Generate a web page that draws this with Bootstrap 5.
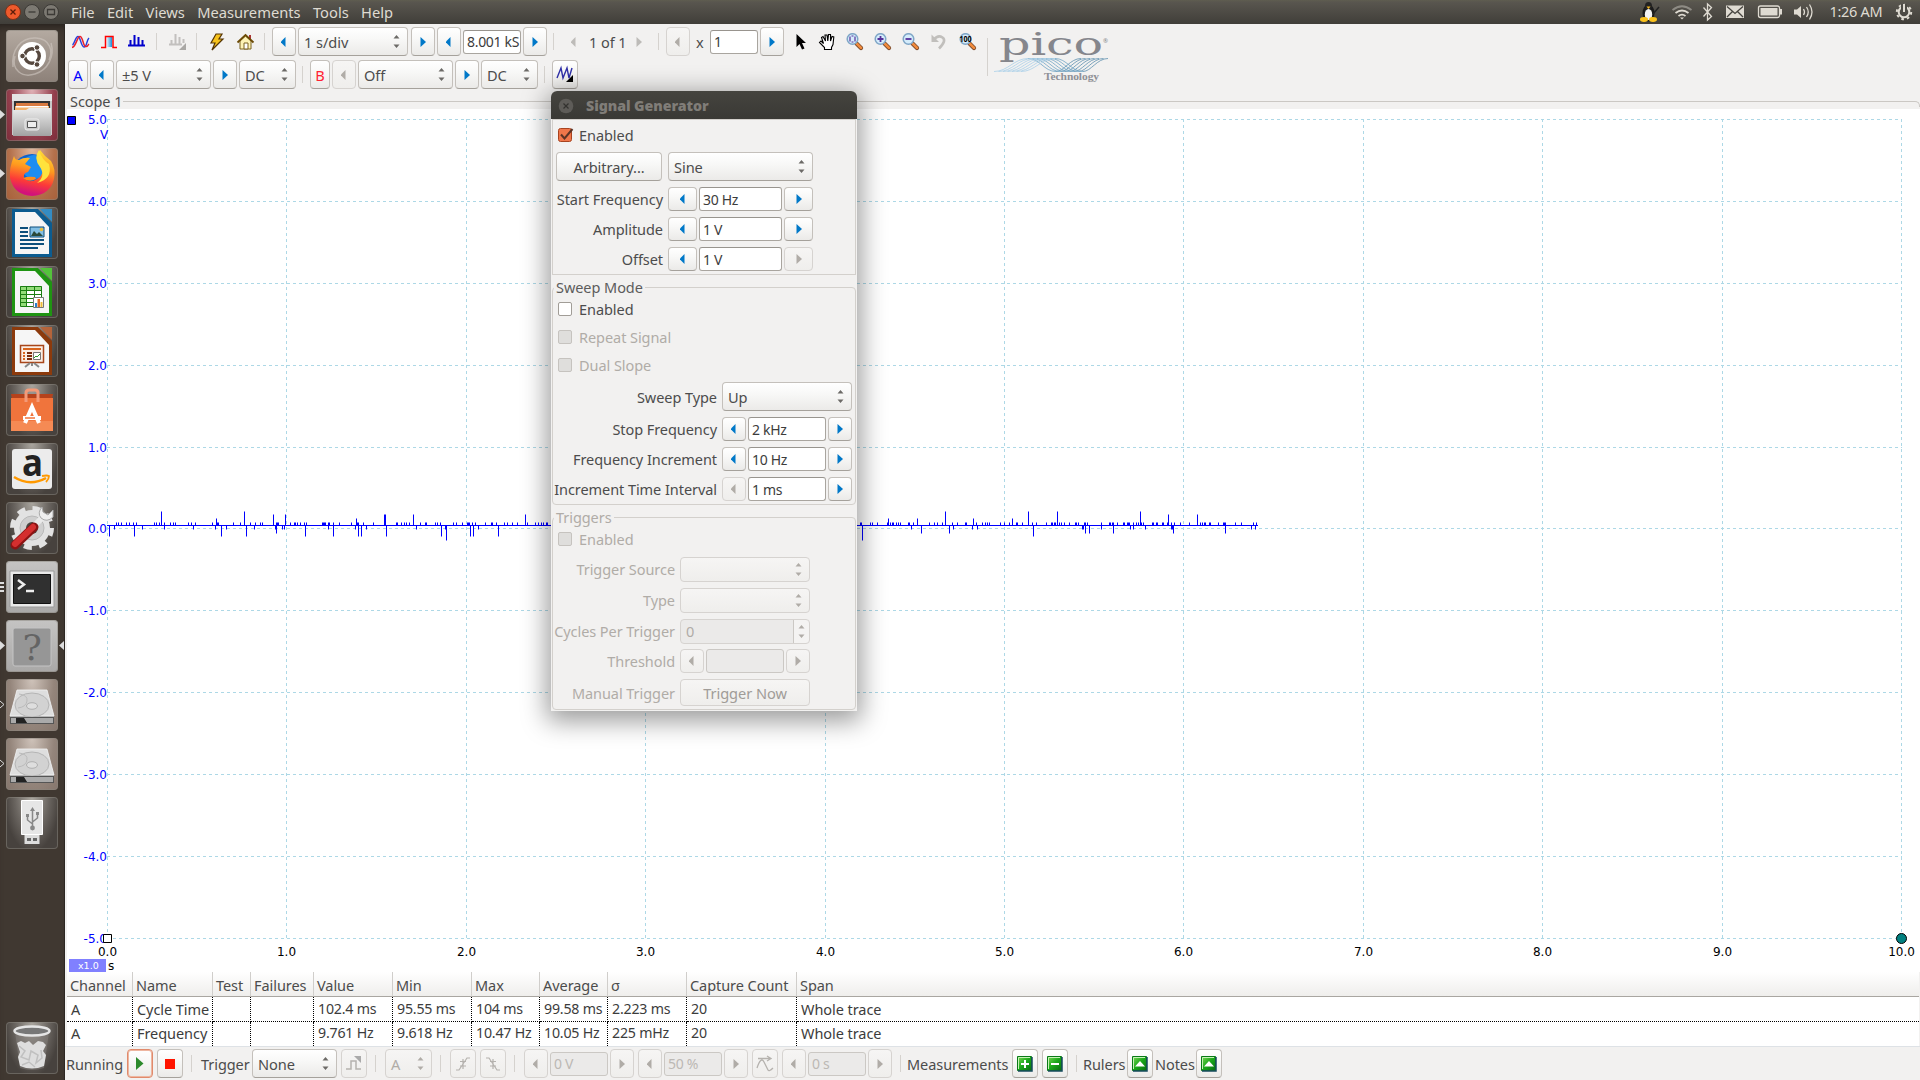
<!DOCTYPE html>
<html lang="en">
<head>
<meta charset="utf-8">
<title>PicoScope</title>
<link rel="stylesheet" href="https://cdn.jsdelivr.net/npm/bootstrap@5.3.0/dist/css/bootstrap.min.css">
<script src="https://cdn.jsdelivr.net/npm/bootstrap@5.3.0/dist/js/bootstrap.bundle.min.js"></script>
<style>
body{width:1920px;height:1080px;overflow:hidden;background:#f2f1f0;color:#4c4c4c;font:14.5px/18px "Noto Sans",sans-serif;letter-spacing:-.06px}
svg{display:block;overflow:visible}
.topbar{height:24px;background:linear-gradient(#5f5d50 0,#59564f 2px,#403e39 100%);color:#dfdbd2;font-size:14.7px}
.winbtns{padding-left:5px}
.winbtn{width:16px;height:16px;margin-right:3px}
.menus{gap:12.4px;margin:-1px 0 0 9px;letter-spacing:0}
.launcher{width:65px;height:1056px;background:#403831;border-right:1px solid #2c2722;padding:6px 0 6px 6px;box-shadow:inset 0 8px 8px -6px #241f1b}
.tile{position:relative;width:52px;height:52px;border-radius:4px;margin-bottom:7px;background:radial-gradient(ellipse at 50% 0,#aaa69f 0,#6b6661 45%,#47423e 75%);box-shadow:inset 0 0 0 1px #8a857e80;flex:none}
.tile.c-ubuntu{background:linear-gradient(#b4aaa1,#8d8179)}
.tile.c-files{background:radial-gradient(ellipse at 50% 0,#e1b3b8,#943f4d 60%,#7c2c3a)}
.tile.c-fox{background:radial-gradient(ellipse at 50% 0,#e0b79d,#b4714c 60%,#a7603a)}
.tile.c-gray{background:linear-gradient(#c5c4c3,#a9a8a7)}
.tile.c-disk{background:radial-gradient(ellipse at 50% 0,#cfc3ba,#94857b 60%,#85766d)}
.pip{position:absolute;left:-6px;top:21px}
.pip-r{position:absolute;left:53px;top:21px}
.work{width:1855px;height:1056px}
.tools{height:73px}
.toolrows{width:922px}
.bar1,.bar2,.barst{display:grid;align-items:center;justify-items:start}
.bar1{padding-left:7px;height:33px;padding-top:2px;grid-template-columns:29px 27px 28px 13px 27px 14px 27px 27px 8px 26px 113px 26px 26px 60px 30px 18px 18px 47px 22px 8px 30px 14px 50px 35px 23px 28px 28px 28px 28px 29px 29px}
.bar2{padding-left:3px;height:33px;padding-top:2px;grid-template-columns:22px 26px 97px 26px 63px 8px 22px 26px 97px 26px 63px 8px 26px}
.barst{padding-left:1px;height:34px;white-space:nowrap;grid-template-columns:61px 30px 34px 10px 51px 89px 34px 10px 55px 10px 30px 34px 10px 26px 60px 28px 26px 60px 28px 30px 26px 60px 32px 7px 105px 30px 34px 7px 44px 28px 41px 26px}
.vsep{width:1px;height:17px;background:#d5d2ce}
.gbtn,.combo{display:flex;align-items:center;justify-content:center;height:29px;border:1px solid #c4c0bb;border-bottom-color:#a5a19b;border-radius:4px;background:linear-gradient(#fff,#f8f8f7 40%,#ebeae8);color:#4c4c4c;padding:0;font-size:14.6px;white-space:nowrap}
.gbtn.off,.combo.off{background:linear-gradient(#f6f5f4,#efeeec);border-color:#d6d3d0;color:#b0aca7}
.gbtn.go{color:#0078c8}
.gbtn.cha{color:#00f}.gbtn.chb{color:#f23}
.combo{justify-content:space-between;padding:0 7px 0 5px}
.combo svg{color:#6c6a67}.combo.off svg{color:#b0aca7}
.field{display:flex;align-items:center;height:24px;border:1px solid #a9a59f;border-top-color:#98948e;border-radius:3px;background:#fff;color:#3c3c3c;padding:1px 0 0 3px;white-space:nowrap;overflow:hidden;font-size:14px;letter-spacing:-.3px}
.field.off{background:#ebeae9;border-color:#cbc8c4;color:#bcb8b4}
.w20{width:20px}.w24{width:24px}.w26{width:26px}.w29{width:29px}.w47{width:47px}.w48{width:48px}.w57{width:57px}.w58{width:58px}.w78{width:78px}.w83{width:83px}.w85{width:85px}.w95{width:95px}.w106{width:106px}.w110{width:110px}.w130{width:130px}.w145{width:145px}
.run{border-color:#e08a6c;box-shadow:inset 0 0 0 1px #eeb6a0}
.scope{height:949px}
.scopename{height:12px;padding-left:5px;line-height:8px}
.frameln{flex:1;height:6px;border-top:1px solid #cbc8c4;border-right:1px solid #cbc8c4;border-radius:0 5px 0 0;margin:4px 0 0 1px}
.plot{margin-left:2px;background:#fff;letter-spacing:0}
.meas{table-layout:fixed;width:1852px;margin-left:2px;background:#fff;border-collapse:separate;border-spacing:0}
.meas th{height:25px;font-weight:400;padding:1px 0 0 3px;border-right:1px solid #d0cecb;border-bottom:1px solid #a9a6a1;background:linear-gradient(#fff,#efeeec);white-space:nowrap}
.meas td{height:25px;padding:0 0 0 4px;color:#3c3c3c;border-right:1px dotted #000;border-bottom:1px dotted #000;white-space:nowrap}
.meas .num{font-size:14.2px;letter-spacing:-.2px}
.meas tr:last-child td{height:24px;border-bottom:0;padding-bottom:2px}
.meas th:last-child,.meas td:last-child{border-right:0}
.dlg{position:absolute;left:551px;top:91px;width:306px;height:620px;background:#f2f1f0;border-radius:6px 6px 0 0;box-shadow:0 6px 26px 4px #00000066;z-index:5}
.dlgbar{height:28px;background:linear-gradient(#45443f,#3a3935);border-radius:6px 6px 0 0;color:#807d78;font-weight:700;padding:1px 0 0 7px}
.dlgbar b{margin-left:12px;font-size:14.2px}
.box{border:1px solid #d3d0cc;margin:0 1px;position:relative}
.box1{height:156px}.box2{height:218px;margin-top:12px;border-radius:4px}.box3{height:193px;margin-top:12px;border-radius:4px}
.cap{position:absolute;top:-10px;left:1px;background:#f2f1f0;padding:0 2px;color:#5c5c5c}
.chk{display:flex;align-items:center;height:28px;padding-left:5px;gap:7px}
.chk.first{height:30px;gap:5px}
.box2 .chk.first,.box3 .chk.first{height:28px;gap:7px;margin-top:7px}
.tick{width:14px;height:14px;border:1px solid #a19d97;border-radius:2px;background:#fff}
.dim{color:#b0aca7}.dim .tick{background:#dfdedc;border-color:#c6c3bf}
.frow{display:flex;gap:2px;align-items:center;height:24px;margin-bottom:6px}
.frow .gbtn{height:24px}
.frow.tall{height:29px;margin-top:3px}
.frow.tall .gbtn{height:29px}
.frow.wave{margin-top:2px;padding-left:3px}
.box3 .frow{margin-bottom:7px}
.box3 .cyc{margin-bottom:6px}
.box3 .combo{height:25px}
.box3 .src{margin-top:4px}
.box3 .last{height:27px;margin:-1px 0 0}
.box3 .last .gbtn{height:27px;color:#a09c98}
.combo.spin{padding-right:0;background:linear-gradient(90deg,#ebeae9 112px,#cbc8c4 112px 113px,#f4f3f2 113px)}
.lab{text-align:right;white-space:nowrap;margin-right:3px;flex:none}
.l1{width:110px}.l2{width:164px}.l3{width:122px}
</style>
</head>
<body>
<svg width="0" height="0" class="position-absolute">
<defs>
<symbol id="la" viewBox="0 0 6 10"><path d="M4.500 0v10L-.5 5z" fill="currentColor"/></symbol>
<symbol id="ra" viewBox="0 0 6 10"><path d="M.5 0v10L6 5z" fill="currentColor"/></symbol>
<symbol id="ud" viewBox="0 0 7 13"><path d="M.5 3.500L3.500 0l3 3.500zM.5 9.500l3 3.500 3-3.500z" fill="currentColor"/></symbol>
<symbol id="mag" viewBox="0 0 18 18"><path d="M10.500 10.500l4.500 4.500" stroke="#7b4a2a" stroke-width="4.200" stroke-linecap="round"/><path d="M11 10.800l4 4" stroke="#f28b3c" stroke-width="2.600" stroke-linecap="round"/><circle cx="6.500" cy="6" r="5.300" fill="#d5ecfb" stroke="#7fa6c6" stroke-width="1.500"/></symbol>
<symbol id="disk" viewBox="0 0 52 52"><path d="M11 11h30l7 25v9H4v-9z" fill="#8f8f8f"/><path d="M11 11h30l7 26H4z" fill="#dedede" stroke="#f4f4f4" stroke-width=".8"/><ellipse cx="26" cy="26" rx="17" ry="12" fill="#d2d2d2" stroke="#b5b5b5"/><ellipse cx="26" cy="27" rx="5.500" ry="3.300" fill="#dedede" stroke="#b0b0b0"/><path d="M13 15q9 1 8 7t-9 7" fill="none" stroke="#bbb"/><path d="M4 38h44v7H4z" fill="#555"/><path d="M5 39h5v5H5zM17 39h30v5H21z" fill="#aaa"/><path d="M10 39h8l3 5H10z" fill="#222"/></symbol>
<linearGradient id="gg" x2="1" y2="1"><stop stop-color="#7ed957"/><stop offset=".5" stop-color="#1aa81a"/><stop offset="1" stop-color="#086c10"/></linearGradient>
<symbol id="green" viewBox="0 0 16 16"><path d="M.5.5h14v14H.5z" fill="url(#gg)" stroke="#0a7a18"/><path d="M1.500 13V1.500H13" fill="none" stroke="#c7f3b7"/><path d="M15 1v14H1" fill="none" stroke="#164a5c" stroke-width="1.500"/></symbol>
<linearGradient id="sil" x2="0" y2="1"><stop stop-color="#ececec"/><stop offset="1" stop-color="#a2a2a2"/></linearGradient>
<linearGradient id="fox" x2=".7" y2="1" x1=".9"><stop stop-color="#ffe53b"/><stop offset=".45" stop-color="#ff9a1e"/><stop offset=".75" stop-color="#fc3b38"/><stop offset="1" stop-color="#d2127b"/></linearGradient>
<linearGradient id="sq"><stop stop-color="#fff"/><stop offset="1" stop-color="#1790d8"/></linearGradient>
</defs>
</svg>

<nav class="topbar d-flex align-items-center">
  <div class="winbtns d-flex">
    <svg class="winbtn" viewBox="0 0 16 16"><circle cx="8" cy="8" r="7.500" fill="#ee5a2c" stroke="#7d3018"/><path d="M5.500 5.500l5 5m0-5l-5 5" stroke="#5a1d0a" stroke-width="1.300"/></svg>
    <svg class="winbtn" viewBox="0 0 16 16"><circle cx="8" cy="8" r="7.500" fill="#7c7972" stroke="#3c3a36"/><path d="M4.500 8h7" stroke="#3c3a36" stroke-width="1.300"/></svg>
    <svg class="winbtn" viewBox="0 0 16 16"><circle cx="8" cy="8" r="7.500" fill="#7c7972" stroke="#3c3a36"/><path d="M4.500 5.500h7v5h-7z" fill="none" stroke="#3c3a36" stroke-width="1.300"/></svg>
  </div>
  <div class="menus d-flex"><span>File</span><span>Edit</span><span>Views</span><span>Measurements</span><span>Tools</span><span>Help</span></div>
  <svg class="ms-auto" width="280" height="24" viewBox="1640 0 280 24">
    <ellipse cx="1648.500" cy="13" rx="6" ry="8.500" fill="#1b1b1b"/><ellipse cx="1648.500" cy="6" rx="3.500" ry="4" fill="#222"/><ellipse cx="1648.500" cy="14.500" rx="3.700" ry="5.500" fill="#f4f4f4"/><path d="M1646.500 6.500h4l-2 2.500z" fill="#f4b51e"/><ellipse cx="1644" cy="19.500" rx="4" ry="2.400" fill="#fbc21c"/><ellipse cx="1653" cy="19.500" rx="4" ry="2.400" fill="#fbc21c"/><path d="M1653 14l6-7" stroke="#222" stroke-width="1.500"/>
    <g fill="none" stroke="#dfdbd2" stroke-width="1.800"><path d="M1672.500 10q9.500-7.500 19 0" stroke="#8e8b84"/><path d="M1675.500 13q6.500-5 13 0M1678.500 16q3.500-2.600 7 0"/><path d="M1703.500 7.500l8 9-4 3.500V4l4 3.500-8 9" stroke-width="1.300"/></g><path d="M1680 17.500h4l-2 2z" fill="#dfdbd2"/>
    <path d="M1726 5.500h18v12.500h-18z" fill="#dfdbd2"/><path d="M1727 6.500l8 7 8-7M1727 17l5.500-5.500M1743 17l-5.500-5.500" fill="none" stroke="#45433e" stroke-width="1.300"/>
    <rect x="1758.500" y="6" width="21" height="11.500" rx="2" fill="none" stroke="#dfdbd2" stroke-width="1.300"/><path d="M1760.500 8h17v7.500h-17zM1780 9h2v5.500h-2z" fill="#dfdbd2"/>
    <path d="M1794 9.500h3l4-3.500v12l-4-3.500h-3z" fill="#dfdbd2"/><path d="M1803.500 9q2 3 0 6M1806.500 7q3.500 5 0 10M1809.500 4.500q5 7.500 0 15" fill="none" stroke="#dfdbd2" stroke-width="1.300"/>
    <text x="1829.500" y="17" font-size="14.500" fill="#dfdbd2" textLength="53">1:26 AM</text>
    <circle cx="1904" cy="12" r="5.300" fill="none" stroke="#dfdbd2" stroke-width="2"/><circle cx="1904" cy="12" r="7.200" fill="none" stroke="#dfdbd2" stroke-width="2" stroke-dasharray="2.600 3.050"/><path d="M1901 4h6v7h-6z" fill="#4d4b45"/><path d="M1904 4v8" stroke="#dfdbd2" stroke-width="2"/>
  </svg>
</nav>

<div class="d-flex">
<aside class="launcher d-flex flex-column">
  <div class="tile c-ubuntu"><svg width="52" height="52"><g fill="none" stroke="#d0c8c1" stroke-opacity=".6" stroke-width="1.500"><path d="M7 37C5 20 15 7 30 8s17 14 13 22M45 13c4 13-3 27-16 31S5 40 9 26"/></g><circle cx="26" cy="26" r="14" fill="#fff"/><circle cx="26" cy="26" r="7.300" fill="none" stroke="#56483f" stroke-width="3.400"/><path d="M26 26L12 26M26 26l7 12M26 26l7-12" stroke="#fff" stroke-width="1.600"/><g fill="#56483f" stroke="#fff"><circle cx="16.500" cy="26" r="2.800"/><circle cx="31" cy="17.500" r="2.800"/><circle cx="31" cy="34.500" r="2.800"/></g></svg></div>
  <div class="tile c-files"><svg class="pip" width="6" height="9"><path d="M0 0l5 4.500L0 9z" fill="#ddd"/></svg><svg width="52" height="52"><path d="M6 5h40v9H6z" fill="#e5e5e5"/><path d="M6 12h40v34H6z" fill="#c8c8c8"/><path d="M8 12h36v10H8z" fill="#333"/><path d="M10 14h32v3H10z" fill="#d97a40"/><path d="M9 17h34v5H9z" fill="#f5b26b"/><path d="M10 17h32v1.500H10z" fill="#fff"/><path d="M7 21h13l3-2h22v28H7z" fill="url(#sil)"/><rect x="19" y="30" width="14" height="11" rx="2" fill="#c9c9c9" stroke="#eee"/><path d="M21.500 32.500h9v6h-9z" fill="#eee" stroke="#555"/></svg></div>
  <div class="tile c-fox"><svg class="pip" width="6" height="9"><path d="M0 0l5 4.500L0 9z" fill="#ddd"/></svg><svg width="52" height="52"><circle cx="26" cy="26" r="20" fill="#0b63cf"/><circle cx="28" cy="19" r="12" fill="#1e8df0"/><path d="M8 8c1 3 2 4 5 4q5-3 11-2l-5 6 6 3-3 5q-5 1-4 6 5 6 13 1 5-3 6-8 0-6-5-10-2-6 2-11 5 7 11 11 5 8 3 18-4 16-22 17Q8 47 4 30 3 20 8 8z" fill="url(#fox)"/><path d="M33 2q-6 8 1 17 6 9-3 16 16-4 12-19Q36 12 33 2z" fill="#ffe23c"/><path d="M17 30q6 5 13 1l-1-2q-7-1-12 1z" fill="#ff8b1c"/></svg></div>
  <div class="tile"><svg width="52" height="52"><path d="M6 2h26l14 14v34H6z" fill="#0c5c90"/><path d="M9 5h20l14 15v27H9z" fill="#f6f6f6"/><path d="M34 2h12v13z" fill="#348cc3"/><path d="M14 21h8M14 25h8M14 29h8M14 33h24M14 37h24M14 41h18" stroke="#0c4f7c" stroke-width="1.800"/><path d="M24 20h14v10H24z" fill="#83bfe4" stroke="#0c4f7c"/><path d="M25 29l3-5 3 3 2-2 4 4z" fill="#2a4a3a"/><circle cx="35.500" cy="22.500" r="1.800" fill="#e9be3c"/></svg></div>
  <div class="tile"><svg width="52" height="52"><path d="M6 2h26l14 14v34H6z" fill="#1f9412"/><path d="M9 5h20l14 15v27H9z" fill="#f6f6f6"/><path d="M34 2h12v13z" fill="#54c33b"/><path d="M14 20h22v20H14z" fill="#fff"/><path d="M14 20h22v4H14zM14 20h6v20h-6z" fill="#93dc78"/><path d="M14.500 20.500h21v20h-21zM14 24.500h22M14 28.500h22M14 32.500h22M14 36.500h22M20.500 20v20M28.500 20v20" fill="none" stroke="#1b7d12"/><path d="M27.500 31.500h10v10h-10z" fill="#fff" stroke="#777"/><path d="M29 37h2v4h-2z" fill="#2a80c8"/><path d="M31.500 33h2.500v8h-2.500z" fill="#e36a1d"/><path d="M34.500 36h2v5h-2z" fill="#eebc3a"/></svg></div>
  <div class="tile"><svg width="52" height="52"><path d="M6 2h26l14 14v34H6z" fill="#8c3a0c"/><path d="M9 5h20l14 15v27H9z" fill="#f6f6f6"/><path d="M34 2h12v13z" fill="#b5643a"/><path d="M14.500 20.500h23v17h-23z" fill="#fbeee4" stroke="#a8461a" stroke-width="1.500"/><path d="M17 24h18" stroke="#d8641d" stroke-width="2"/><path d="M17 28h2M17 31h2M17 34h2" stroke="#d8641d" stroke-width="2"/><path d="M21 28h5M21 31h5M21 34h5" stroke="#7c2d0c" stroke-width="2"/><path d="M27.500 27.500h7v7h-7z" fill="#fff" stroke="#777"/><path d="M28 33l2-2 1 1 3-3" fill="none" stroke="#2a9a2a"/><path d="M24 38l-5 4M28 38l5 4M26 38v3" stroke="#888" stroke-width="2"/></svg></div>
  <div class="tile"><svg width="52" height="52"><path d="M5 10h42l-1 5H6z" fill="#b5421c"/><path d="M5 14h42v33H5z" fill="#f0743c"/><path d="M5 37h42v10H5z" fill="#f58a54"/><path d="M20 18V9q0-3 3-3h6q3 0 3 3v9" fill="none" stroke="#f39a78" stroke-width="3"/><path d="M19 39l7-16 7 16" fill="none" stroke="#fff" stroke-width="4"/><path d="M17 34h18" stroke="#fff" stroke-width="4"/><path d="M19 34h10" stroke="#f0743c" stroke-width="1.500"/></svg></div>
  <div class="tile"><svg width="52" height="52"><rect x="6" y="6" width="40" height="40" rx="3" fill="#ececec"/><text x="16" y="33" font-family="Open Sans,sans-serif" font-weight="700" font-size="37" textLength="21" lengthAdjust="spacingAndGlyphs" fill="#222">a</text><path d="M8 34q16 10 32 1" fill="none" stroke="#f90" stroke-width="2.500"/><path d="M36 33q5-1 7 0 0 3-3 6" fill="none" stroke="#f90" stroke-width="1.800"/></svg></div>
  <div class="tile"><svg width="52" height="52"><circle cx="26" cy="26" r="18" fill="#e2e2e2"/><circle cx="26" cy="26" r="19.500" fill="none" stroke="#e2e2e2" stroke-width="5" stroke-dasharray="8 7.300"/><circle cx="26" cy="26" r="12" fill="#cfcfcf" stroke="#b9b9b9"/><circle cx="26" cy="26" r="6" fill="#4a4541"/><path d="M24 28L38 14" stroke="#e9e9e9" stroke-width="6"/><path d="M36 5q-5 6-1 11 6 5 12-1V8l-5 5-5-3z" fill="#eee" stroke="#aaa"/><path d="M9 43L28 25" stroke="#8b1414" stroke-width="9" stroke-linecap="round"/><path d="M9 42L27 25" stroke="#d42f2f" stroke-width="6" stroke-linecap="round"/></svg></div>
  <div class="tile c-gray"><svg class="pip" width="6" height="12"><path d="M0 1h4M0 5h4M0 9h4" stroke="#ddd" stroke-width="2"/></svg><svg width="52" height="52"><path d="M4 10h44v36H4z" fill="#e9e9e9" stroke="#999"/><path d="M7.500 13.500h37v29h-37z" fill="#303030" stroke="#111"/><path d="M12 19l6 4.500-6 4.500" fill="none" stroke="#eee" stroke-width="2.500"/><path d="M20 30h8" stroke="#eee" stroke-width="2.500"/></svg></div>
  <div class="tile c-gray"><svg class="pip" width="6" height="9"><path d="M0 0l5 4.500L0 9z" fill="#ddd"/></svg><svg class="pip-r" width="6" height="9"><path d="M5 0L0 4.500 5 9z" fill="#ddd"/></svg><svg width="52" height="52"><rect x="7" y="8" width="38" height="38" rx="2" fill="#969696" stroke="#c4c4c4"/><text x="26" y="40" font-family="DejaVu Serif,serif" font-size="36" text-anchor="middle" fill="#646464">?</text></svg></div>
  <div class="tile c-disk"><svg class="pip" width="6" height="9"><path d="M0 1l4 3.500L0 8" fill="none" stroke="#ddd"/></svg><svg width="52" height="52"><use href="#disk"/></svg></div>
  <div class="tile c-disk"><svg class="pip" width="6" height="9"><path d="M0 1l4 3.500L0 8" fill="none" stroke="#ddd"/></svg><svg width="52" height="52"><use href="#disk"/></svg></div>
  <div class="tile"><svg width="52" height="52"><path d="M15.500 3.500h21v34h-21z" fill="#e6e6e6" stroke="#fff"/><path d="M18.500 38h15v9h-15z" fill="#ddd"/><path d="M21 41h4v3h-4zM27 41h4v3h-4z" fill="#666"/><g stroke="#888" fill="none" stroke-width="1.500"><path d="M26.500 30V12M26.500 27l-5-4v-3M26.500 25l5-4v-4"/></g><circle cx="26.500" cy="31" r="2.400" fill="#888"/><path d="M24 14l2.500-4 2.500 4zM20 17h3v3h-3zM30 15h3v3h-3z" fill="#888"/></svg></div>
  <div class="tile mt-auto mb-0"><svg width="52" height="52"><path d="M9 10h34l-5 36q-12 4-24 0z" fill="#8a8683" opacity=".45"/><path d="M11 21l4-2 4 2 4-2 4 4 5-4 5 1 3 3-3 6 3 4-2 11q-12 5-24 0l-2-9 2-5z" fill="#dedede"/><path d="M13 24l6 5-4 6 8 3 2-9 7 4-2 8 6-5-1-8M16 43l7-3 6 5" fill="none" stroke="#c0c0c0" stroke-width="1.500"/><ellipse cx="26" cy="9" rx="17.500" ry="4.500" fill="#777" stroke="#e5e5e5" stroke-width="2.500"/></svg></div>
</aside>

<main class="work">
  <div class="tools d-flex">
    <div class="toolrows">
      <div class="bar1">
        <svg width="18" height="16"><path d="M.5 11C2.500 10 3.500 2.500 6 2.500S9 13 12 13s2.500-7 5-9" fill="none" stroke="#2340e0" stroke-width="1.500"/><path d="M0 13.500C4 13 5 2.500 8 2.500S11 12 13.500 12.500 15.500 11 17 10" fill="none" stroke="#e8202c" stroke-width="1.500"/></svg>
        <svg width="17" height="16"><path d="M5 3h6v10H5z" fill="url(#sq)"/><path d="M0 13.500h4.500V2.500H12v11h4" fill="none" stroke="#f00" stroke-width="1.500"/></svg>
        <svg width="17" height="16"><path d="M2.500 11V6M6.500 11V1M10.500 11V3M14.500 11V6M0 11.500h17" stroke="#00c" stroke-width="2"/></svg>
        <i class="vsep"></i>
        <svg width="18" height="18"><path d="M2.500 12V7M6.500 12V1M10.500 12V4M14.500 10V6M0 11.500h13" stroke="#c2c0be" stroke-width="2"/><path d="M10 17h7v-7z" fill="#aaa8a5"/></svg>
        <i class="vsep"></i>
        <svg width="14" height="18"><path d="M6 1h6l-3 5h4L2 17l3-7H1z" fill="#f6c21b" stroke="#553404" stroke-width="1.200"/></svg>
        <svg width="17" height="18"><path d="M12 2h2v5h-2z" fill="#a33"/><path d="M3 8v8h11V8L8.500 3z" fill="#fdf3b5" stroke="#7a6320"/><path d="M.5 9.500L8.500 2l8 7.500" fill="none" stroke="#6b4a05" stroke-width="1.800"/><path d="M7 10h4v6H7z" fill="#fff" stroke="#7a6320"/></svg>
        <i class="vsep"></i>
        <div class="gbtn go w24"><svg width="6" height="10"><use href="#la"/></svg></div>
        <div class="combo w110">1 s/div<svg width="7" height="13"><use href="#ud"/></svg></div>
        <div class="gbtn go w24"><svg width="6" height="10"><use href="#ra"/></svg></div>
        <div class="gbtn go w24"><svg width="6" height="10"><use href="#la"/></svg></div>
        <div class="field w58">8.001 kS</div>
        <div class="gbtn go w24"><svg width="6" height="10"><use href="#ra"/></svg></div>
        <i class="vsep"></i>
        <svg width="6" height="10" color="#bdbbb8"><use href="#la"/></svg>
        <span class="text-nowrap">1 of 1</span>
        <svg width="6" height="10" color="#bdbbb8"><use href="#ra"/></svg>
        <i class="vsep"></i>
        <div class="gbtn off w24"><svg width="6" height="10"><use href="#la"/></svg></div>
        <span>x</span>
        <div class="field w48">1</div>
        <div class="gbtn go w24"><svg width="6" height="10"><use href="#ra"/></svg></div>
        <svg width="12" height="18"><path d="M1.500 1v13l3-3 2.500 5.500 2.500-1L7 10h4z" fill="#000"/></svg>
        <svg width="18" height="18"><path d="M6.500 16.500v-2L1.500 9.500 3 8l2.500 2.500L3.500 4.500l1.500-1L7.500 8l-.5-6h2l.8 6 .7-6.500h2L12.500 8l1.500-4.500 1.800.5-.8 7.500-1.500 3v2z" fill="#fff" stroke="#000" stroke-width="1.100"/></svg>
        <svg width="18" height="18"><use href="#mag"/><path d="M4 3.500v5M9 3.500v5M5.500 3h2M5.500 9h2" stroke="#55309a" stroke-width="1.200"/></svg>
        <svg width="18" height="18"><use href="#mag"/><path d="M3.500 6h6M6.500 3v6" stroke="#55309a" stroke-width="1.800"/></svg>
        <svg width="18" height="18"><use href="#mag"/><path d="M3.500 6h6" stroke="#55309a" stroke-width="1.800"/></svg>
        <svg width="18" height="18"><path d="M4 6.500q4-5 8.500-2t-3.500 11" fill="none" stroke="#c1bfbc" stroke-width="2.600"/><path d="M1.500 1.500v7.500H9z" fill="#c1bfbc"/></svg>
        <svg width="18" height="18"><use href="#mag"/><text x=".5" y="9" font-size="8" font-weight="700" fill="#000" textLength="12" lengthAdjust="spacingAndGlyphs">100</text></svg>
      </div>
      <div class="bar2">
        <div class="gbtn cha w20">A</div>
        <div class="gbtn go w24"><svg width="6" height="10"><use href="#la"/></svg></div>
        <div class="combo w95">±5 V<svg width="7" height="13"><use href="#ud"/></svg></div>
        <div class="gbtn go w24"><svg width="6" height="10"><use href="#ra"/></svg></div>
        <div class="combo w57">DC<svg width="7" height="13"><use href="#ud"/></svg></div>
        <i class="vsep"></i>
        <div class="gbtn chb w20">B</div>
        <div class="gbtn off w24"><svg width="6" height="10"><use href="#la"/></svg></div>
        <div class="combo w95">Off<svg width="7" height="13"><use href="#ud"/></svg></div>
        <div class="gbtn go w24"><svg width="6" height="10"><use href="#ra"/></svg></div>
        <div class="combo w57">DC<svg width="7" height="13"><use href="#ud"/></svg></div>
        <i class="vsep"></i>
        <div class="gbtn w26"><svg width="18" height="18"><path d="M1 12L5 2l2 10 4-10 2 10 3-10" fill="none" stroke="#3030a8" stroke-width="1.400"/><path d="M10 16h7V9z" fill="#000"/></svg></div>
      </div>
    </div>
    <svg width="130" height="73" viewBox="987 24 130 73">
      <path d="M987.500 38v38" stroke="#d5d2ce"/>
      <text x="999" y="55" font-family="DejaVu Serif,serif" font-size="32" fill="#85868c" textLength="104" lengthAdjust="spacingAndGlyphs">pico</text>
      <text x="1103" y="43" font-size="6" fill="#85868c">®</text>
      <g id="waves" fill="none" stroke-width=".8"></g>
      <text x="1044" y="80" font-family="Liberation Serif,serif" font-weight="700" font-size="10" fill="#8f9096" textLength="55" lengthAdjust="spacingAndGlyphs">Technology</text>
    </svg>
  </div>

  <section class="scope">
    <div class="scopename d-flex"><span class="text-nowrap">Scope 1</span><div class="frameln"></div></div>
    <svg class="plot" width="1853" height="863" viewBox="67 109 1853 863" font-family="DejaVu Sans,sans-serif" font-size="12">
      <g id="grid" stroke="#add8e6" stroke-dasharray="3 3"></g>
      <g id="labels"></g>
      <path d="M107 525.500H1258" stroke="#00f"/>
      <path id="trace" stroke="#00f"/>
      <path d="M67.500 116.500h8v8h-8z" fill="#00f" stroke="#000"/>
      <text x="100" y="139" fill="#00f">V</text>
      <path d="M103.500 934.500h8v8h-8z" fill="#fff" stroke="#000"/>
      <circle cx="1901.500" cy="938.500" r="5" fill="#008080" stroke="#000"/>
      <path d="M69 959h37v13H69z" fill="#8080ff"/><text x="78" y="969" font-size="9.500" fill="#fff">x1.0</text>
      <text x="108" y="970" fill="#000">s</text>
    </svg>
    <table class="meas">
      <colgroup><col style="width:66px"><col style="width:80px"><col style="width:38px"><col style="width:63px"><col style="width:79px"><col style="width:79px"><col style="width:68px"><col style="width:68px"><col style="width:79px"><col style="width:110px"><col></colgroup>
      <tr><th>Channel</th><th>Name</th><th>Test</th><th>Failures</th><th>Value</th><th>Min</th><th>Max</th><th>Average</th><th>σ</th><th>Capture Count</th><th>Span</th></tr>
      <tr><td>A</td><td>Cycle Time</td><td></td><td></td><td class="num">102.4 ms</td><td class="num">95.55 ms</td><td class="num">104 ms</td><td class="num">99.58 ms</td><td class="num">2.223 ms</td><td class="num">20</td><td>Whole trace</td></tr>
      <tr><td>A</td><td>Frequency</td><td></td><td></td><td class="num">9.761 Hz</td><td class="num">9.618 Hz</td><td class="num">10.47 Hz</td><td class="num">10.05 Hz</td><td class="num">225 mHz</td><td class="num">20</td><td>Whole trace</td></tr>
    </table>
  </section>

  <footer class="barst border-top">
    <span>Running</span>
    <div class="gbtn run w26"><svg width="8" height="13"><path d="M0 0v13l7.500-6.500z" fill="#2c8a2c"/></svg></div>
    <div class="gbtn w26"><svg width="10" height="10"><path d="M0 0h10v10H0z" fill="#ff1400"/></svg></div>
    <i class="vsep"></i><span>Trigger</span>
    <div class="combo w85">None<svg width="7" height="13"><use href="#ud"/></svg></div>
    <div class="gbtn off w26"><svg width="18" height="18"><path d="M1 14h5V6h5v8h5" fill="none" stroke="#b5b2ae" stroke-width="1.500"/><path d="M9 1h7v7z" fill="#aaa"/></svg></div>
    <i class="vsep"></i>
    <div class="combo off w47">A<svg width="7" height="13"><use href="#ud"/></svg></div>
    <i class="vsep"></i>
    <div class="gbtn off w26"><svg width="16" height="16"><path d="M1 14h3L12 2h3M5 5.500h6M8 3v10M5 10h6" fill="none" stroke="#b5b2ae" stroke-width="1.200"/></svg></div>
    <div class="gbtn off w26"><svg width="16" height="16"><path d="M1 2h3l8 12h3M5 5.500h6M8 3v10M5 10h6" fill="none" stroke="#b5b2ae" stroke-width="1.200"/></svg></div>
    <i class="vsep"></i>
    <div class="gbtn off w24"><svg width="6" height="10"><use href="#la"/></svg></div><div class="field off w58">0 V</div><div class="gbtn off w24"><svg width="6" height="10"><use href="#ra"/></svg></div>
    <div class="gbtn off w24"><svg width="6" height="10"><use href="#la"/></svg></div><div class="field off w58">50 %</div><div class="gbtn off w24"><svg width="6" height="10"><use href="#ra"/></svg></div>
    <div class="gbtn off w26"><svg width="18" height="16"><path d="M1 12q4-12 7-6t4 8 5-2M2 2.500h12M11 0l4 2.500L11 5" fill="none" stroke="#b5b2ae" stroke-width="1.300"/></svg></div>
    <div class="gbtn off w24"><svg width="6" height="10"><use href="#la"/></svg></div><div class="field off w58">0 s</div><div class="gbtn off w24"><svg width="6" height="10"><use href="#ra"/></svg></div>
    <i class="vsep"></i><span>Measurements</span>
    <div class="gbtn w26"><svg width="16" height="16"><use href="#green"/><path d="M4 8h8M8 4v8" stroke="#fff" stroke-width="2"/></svg></div>
    <div class="gbtn w26"><svg width="16" height="16"><use href="#green"/><path d="M4 8h8" stroke="#fff" stroke-width="2"/></svg></div>
    <i class="vsep"></i><span>Rulers</span>
    <div class="gbtn w26"><svg width="16" height="16"><use href="#green"/><path d="M3 10.500h10L8 5z" fill="#fff"/></svg></div>
    <span>Notes</span>
    <div class="gbtn w26"><svg width="16" height="16"><use href="#green"/><path d="M3 10.500h10L8 5z" fill="#fff"/></svg></div>
  </footer>
</main>
</div>

<div class="dlg">
  <div class="dlgbar d-flex align-items-center"><svg width="16" height="16"><circle cx="8" cy="8" r="7.300" fill="#5e5c58"/><path d="M5.500 5.500l5 5m0-5l-5 5" stroke="#33322f" stroke-width="1.200"/></svg><b>Signal Generator</b></div>
  <div class="box box1">
    <div class="chk first"><svg width="16" height="16" viewBox="0 0 16 16"><rect x=".5" y="1.500" width="13" height="13" rx="2" fill="#f0764a" stroke="#a8431f"/><path d="M3 7.500l3.500 4L14.500 2" fill="none" stroke="#5c3325" stroke-width="2"/></svg>Enabled</div>
    <div class="frow tall wave"><div class="gbtn w106">Arbitrary...</div><div class="combo w145 ms-1">Sine<svg width="7" height="13"><use href="#ud"/></svg></div></div>
    <div class="frow"><span class="lab l1">Start Frequency</span><div class="gbtn w29 go"><svg width="6" height="10"><use href="#la"/></svg></div><div class="field w83">30 Hz</div><div class="gbtn w29 go"><svg width="6" height="10"><use href="#ra"/></svg></div></div>
    <div class="frow"><span class="lab l1">Amplitude</span><div class="gbtn w29 go"><svg width="6" height="10"><use href="#la"/></svg></div><div class="field w83">1 V</div><div class="gbtn w29 go"><svg width="6" height="10"><use href="#ra"/></svg></div></div>
    <div class="frow"><span class="lab l1">Offset</span><div class="gbtn w29 go"><svg width="6" height="10"><use href="#la"/></svg></div><div class="field w83">1 V</div><div class="gbtn off w29"><svg width="6" height="10"><use href="#ra"/></svg></div></div>
  </div>
  <div class="box box2"><span class="cap">Sweep Mode</span>
    <div class="chk first"><i class="tick"></i>Enabled</div>
    <div class="chk dim"><i class="tick"></i>Repeat Signal</div>
    <div class="chk dim"><i class="tick"></i>Dual Slope</div>
    <div class="frow tall"><span class="lab l2">Sweep Type</span><div class="combo w130">Up<svg width="7" height="13"><use href="#ud"/></svg></div></div>
    <div class="frow"><span class="lab l2">Stop Frequency</span><div class="gbtn w24 go"><svg width="6" height="10"><use href="#la"/></svg></div><div class="field w78">2 kHz</div><div class="gbtn w24 go"><svg width="6" height="10"><use href="#ra"/></svg></div></div>
    <div class="frow"><span class="lab l2">Frequency Increment</span><div class="gbtn w24 go"><svg width="6" height="10"><use href="#la"/></svg></div><div class="field w78">10 Hz</div><div class="gbtn w24 go"><svg width="6" height="10"><use href="#ra"/></svg></div></div>
    <div class="frow"><span class="lab l2">Increment Time Interval</span><div class="gbtn off w24"><svg width="6" height="10"><use href="#la"/></svg></div><div class="field w78">1 ms</div><div class="gbtn w24 go"><svg width="6" height="10"><use href="#ra"/></svg></div></div>
  </div>
  <div class="box box3 dim"><span class="cap dim">Triggers</span>
    <div class="chk first"><i class="tick"></i>Enabled</div>
    <div class="frow src"><span class="lab l3">Trigger Source</span><div class="combo off w130"><i></i><svg width="7" height="13"><use href="#ud"/></svg></div></div>
    <div class="frow"><span class="lab l3">Type</span><div class="combo off w130"><i></i><svg width="7" height="13"><use href="#ud"/></svg></div></div>
    <div class="frow cyc"><span class="lab l3">Cycles Per Trigger</span><div class="combo off spin w130">0<svg width="15" height="13" viewBox="-4 0 15 13"><path d="M.5 3.500L3.500 0l3 3.500zM.5 9.500l3 3.500 3-3.500z" fill="currentColor"/></svg></div></div>
    <div class="frow"><span class="lab l3">Threshold</span><div class="gbtn off w24"><svg width="6" height="10"><use href="#la"/></svg></div><div class="field off w78"></div><div class="gbtn off w24"><svg width="6" height="10"><use href="#ra"/></svg></div></div>
    <div class="frow last"><span class="lab l3">Manual Trigger</span><div class="gbtn off w130">Trigger Now</div></div>
  </div>
</div>
<script>
let g='',t='';
for(let i=0;i<=10;i++){
  const x=Math.floor(107.3+179.44*i)+.5,y=Math.floor(119.45+81.9*i)+.5;
  g+=`<path d="M${x} 119V938"/><path d="M107 ${y}H1902"/>`;
  t+=`<text x="107" y="${y+4}" fill="#00f" text-anchor="end">${(5-i).toFixed(1)}</text><text x="${x}" y="956" fill="#000" text-anchor="middle">${i.toFixed(1)}</text>`;
}
document.getElementById('grid').innerHTML=g;
document.getElementById('labels').innerHTML=t;
// Spikes of the capture: height in px (positive is up) -> sample positions in thirds of a pixel
const runs=[[100,{
3:[49,55,64,79,88,100,109,163,169,178,193,211,220,226,265,274,286,337,352,355,400,421,451,466,481,487,529,532,535,571,583,586,592,601,613,619,667,670,673,676,685,688,700,718,754,772,775,790,820,889,892,904,913,919,928,961,976,979,1006,1012,1021,1060,1069,1087,1102,1105,1108,1117,1126,1156,1174,1177,1189,1213,1222,1237,1252,1282,1306,1315,1324,1330,1339,1342],
7:[349,769],11:[520,556,853,856,940,1276],14:[184,433],
'-4':[43,127,193,280,346,379,463,526,547,553,685,766,799,949,1036,1135],'-8':[529],'-11':[28,103,364,439,616,700,775,784,859,1024,1111,1120,1195],'-15':[1039]}],
[850,{3:[31,34,61,67,82,112,121,127,130,139,145,151,175,178,190,238,253,262,277,307,322,346,349,379,397,406,412,418,451,463,478,499,502,517,547,559,589,604,607,613,616,628,634,643,658,676,679,685,703,706,712,754,778,781,787,790,802,820,823,832,835,838,850,859,865,874,880,907,910,919,922,937,940,952,964,973,991,1018,1051,1057,1063,1066,1078,1081,1105,1120,1123,1126,1156,1174,1210,1219],
7:[115,202,370,487],11:[955,1042],14:[286,535,622,871],
'-4':[184,310,367,382,697,700,754,841,850,886,964,967,1204,1216],'-8':[214,298,706,718,790,970,1126],'-11':[550],'-15':[37]}]];
let d='';
for(const [x0,set] of runs)for(const h in set)for(const p of set[h])d+=`M${x0+Math.floor(p/3)+.5} 525.500v${-h}`;
document.getElementById('trace').setAttribute('d',d);
let w='';
for(let i=0;i<7;i++){const o=i*4.5;
  w+=`<path stroke="#a9cfe8" d="M${994+o} 71.500c14 0 20-13 34-13"/><path stroke="#6ea3c4" d="M${1028+o} 58.500c12 0 16 13 28 13"/><path stroke="#5d8fae" d="M${1056+o} 71.500c8 0 14-13 25-13"/>`;}
document.getElementById('waves').innerHTML=w;
</script>
</body>
</html>
